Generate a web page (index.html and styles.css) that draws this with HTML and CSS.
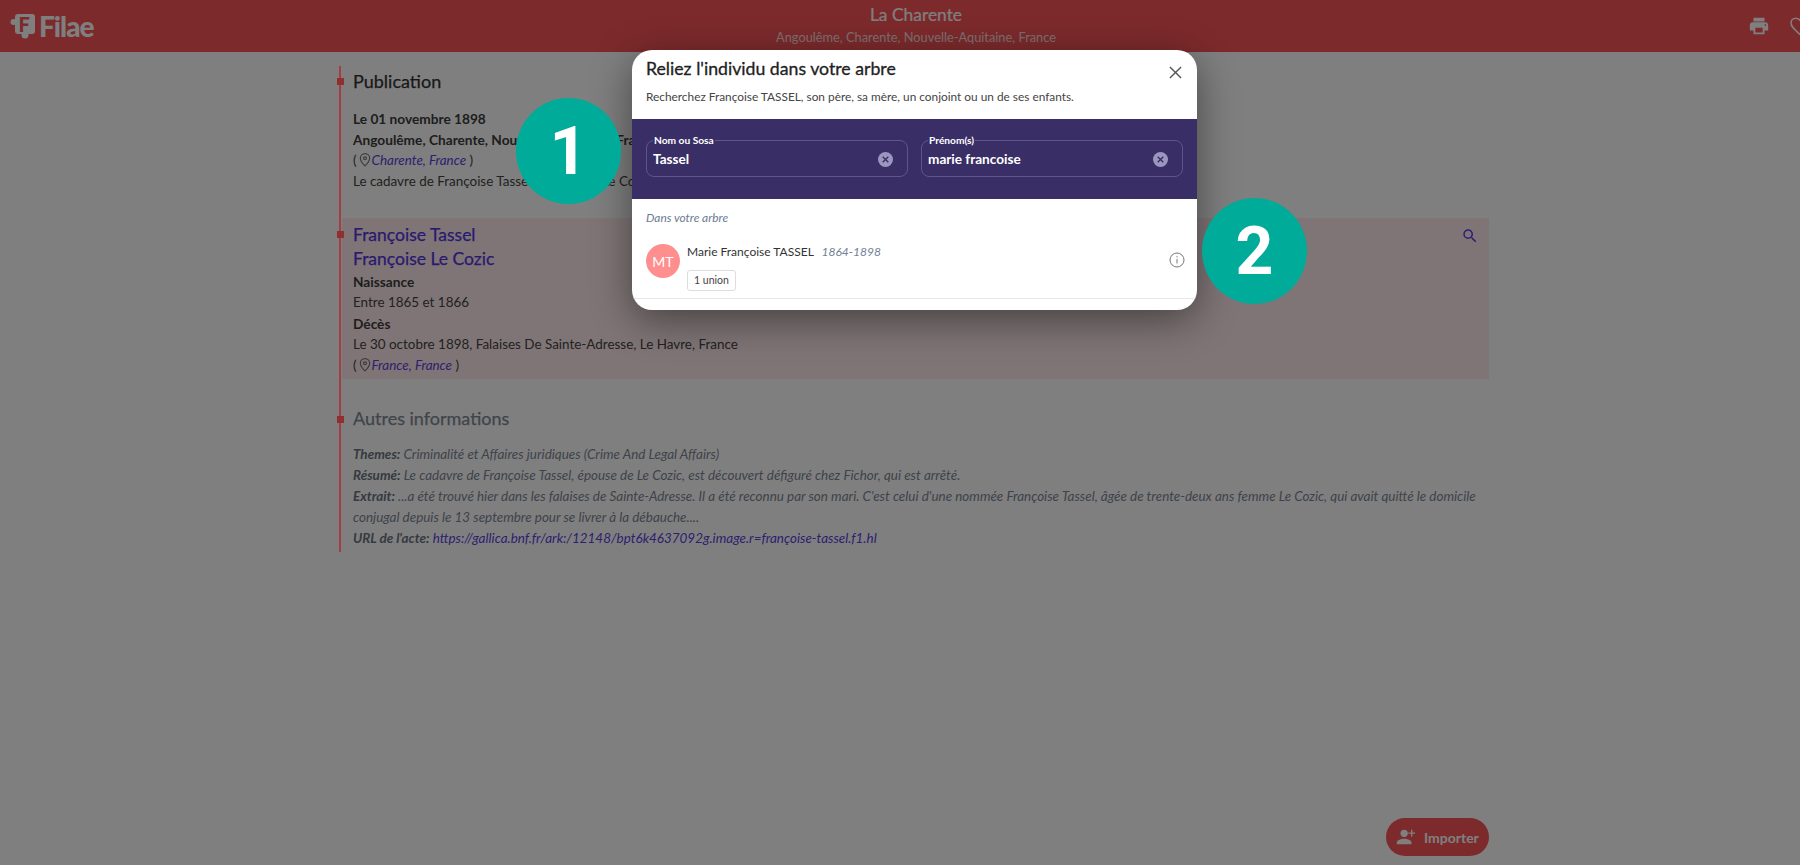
FILE: index.html
```html
<!DOCTYPE html>
<html lang="fr">
<head>
    <meta charset="UTF-8">
    <title>La Charente – Filae</title>
    <link rel="stylesheet" href="styles.css">
</head>
<body>
    <div class="topbar">
        <div class="brand">
            <svg class="brand-mark" viewBox="0 0 26 26" width="26" height="26">
                <rect x="5" y="1" width="20" height="20" rx="3" fill="#fff"/>
                <circle cx="3.5" cy="9" r="3" fill="#fff"/>
                <circle cx="15" cy="22" r="3.5" fill="#fff"/>
                <text x="8.5" y="18.500" class="brand-f">F</text>
            </svg>
            <span class="brand-name">Filae</span>
        </div>
        <div class="topbar-title">
            <div class="place">La Charente</div>
            <div class="place-sub">Angoulême, Charente, Nouvelle-Aquitaine, France</div>
        </div>
        <div class="topbar-icons">
            <svg viewBox="0 0 24 24" width="22" height="22" fill="#fff"><path d="M19 8H5c-1.66 0-3 1.34-3 3v6h4v4h12v-4h4v-6c0-1.66-1.34-3-3-3zm-3 11H8v-5h8v5zm3-7c-.55 0-1-.45-1-1s.45-1 1-1 1 .45 1 1-.45 1-1 1zm-1-9H6v4h12V3z"/></svg>
            <svg viewBox="0 0 24 24" width="24" height="24" fill="none" stroke="#fff" stroke-width="1.6"><path d="M12 20.5l-1.2-1.1C6 15.100 3 12.400 3 9c0-2.700 2.100-4.800 4.800-4.800 1.600 0 3.100.7 4.200 1.900 1.100-1.200 2.600-1.900 4.200-1.900C18.900 4.200 21 6.300 21 9c0 3.400-3 6.100-7.800 10.400z"/></svg>
        </div>
    </div>

    <div class="content">
        <div class="block">
            <h2 class="block-title">Publication</h2>
            <p class="strong">Le 01 novembre 1898</p>
            <p class="strong">Angoulême, Charente, Nouvelle-Aquitaine, France</p>
            <p>(<svg class="pin" viewBox="0 0 24 24" width="14" height="14" fill="none" stroke="#777" stroke-width="2"><path d="M12 22s-8-7.500-8-13a8 8 0 0 1 16 0c0 5.500-8 13-8 13z"/><circle cx="12" cy="9" r="2.500"/></svg><a class="link">Charente, France</a> )</p>
            <p>Le cadavre de Françoise Tassel, épouse de Le Cozic, est découvert défiguré chez Fichor, qui est arrêté.</p>
        </div>

        <div class="block block-hit">
            <svg class="hit-search" viewBox="0 0 24 24" width="18" height="18" fill="#5c3fe0"><path d="M15.500 14h-.79l-.28-.27A6.470 6.470 0 0 0 16 9.500 6.500 6.500 0 1 0 9.500 16c1.610 0 3.090-.59 4.230-1.570l.27.28v.79l5 4.990L20.490 19l-4.990-5zm-6 0C7.010 14 5 11.990 5 9.500S7.010 5 9.500 5 14 7.010 14 9.500 11.990 14 9.500 14z"/></svg>
            <h2 class="hit-name">Françoise Tassel</h2>
            <h2 class="hit-name">Françoise Le Cozic</h2>
            <p class="strong">Naissance</p>
            <p>Entre 1865 et 1866</p>
            <p class="strong">Décès</p>
            <p>Le 30 octobre 1898, Falaises De Sainte-Adresse, Le Havre, France</p>
            <p>(<svg class="pin" viewBox="0 0 24 24" width="14" height="14" fill="none" stroke="#777" stroke-width="2"><path d="M12 22s-8-7.500-8-13a8 8 0 0 1 16 0c0 5.500-8 13-8 13z"/><circle cx="12" cy="9" r="2.500"/></svg><a class="link">France, France</a> )</p>
        </div>

        <div class="block block-other">
            <h2 class="block-title muted">Autres informations</h2>
            <div class="notes">
                <p><b>Themes:</b> Criminalité et Affaires juridiques (Crime And Legal Affairs)</p>
                <p><b>Résumé:</b> Le cadavre de Françoise Tassel, épouse de Le Cozic, est découvert défiguré chez Fichor, qui est arrêté.</p>
                <p><b>Extrait:</b> ...a été trouvé hier dans les falaises de Sainte-Adresse. Il a été reconnu par son mari. C'est celui d'une nommée Françoise Tassel, âgée de trente-deux ans femme Le Cozic, qui avait quitté le domicile conjugal depuis le 13 septembre pour se livrer à la débauche....</p>
                <p><b>URL de l'acte:</b> <a class="link">https://gallica.bnf.fr/ark:/12148/bpt6k4637092g.image.r=françoise-tassel.f1.hl</a></p>
            </div>
        </div>
    </div>

    <button class="import-btn">
        <svg viewBox="0 0 24 24" width="22" height="22" fill="#fff"><circle cx="10" cy="8" r="4"/><path d="M10 14c-2.670 0-8 1.340-8 4v2h16v-2c0-2.660-5.330-4-8-4z"/><path d="M19 7V4h-1.500v3h-3v1.500h3v3H19v-3h3V7z"/></svg>
        Importer
    </button>

    <div class="overlay"></div>

    <div class="timeline">
        <span class="dot dot-pub"></span>
        <span class="dot dot-hit"></span>
        <span class="dot dot-other"></span>
    </div>

    <div class="modal">
        <div class="modal-head">
            <h3>Reliez l'individu dans votre arbre</h3>
            <svg class="modal-close" viewBox="0 0 14 14" width="13" height="13" stroke="#555" stroke-width="1.500"><path d="M1 1l12 12M13 1L1 13"/></svg>
            <p>Recherchez Françoise TASSEL, son père, sa mère, un conjoint ou un de ses enfants.</p>
        </div>
        <div class="search-band">
            <fieldset class="field">
                <legend>Nom ou Sosa</legend>
                <span class="field-value">Tassel</span>
                <svg viewBox="0 0 16 16" width="15" height="15"><circle cx="8" cy="8" r="8" fill="#9c97bf"/><path d="M5 5l6 6M11 5l-6 6" stroke="#392e66" stroke-width="1.500"/></svg>
            </fieldset>
            <fieldset class="field">
                <legend>Prénom(s)</legend>
                <span class="field-value">marie francoise</span>
                <svg viewBox="0 0 16 16" width="15" height="15"><circle cx="8" cy="8" r="8" fill="#9c97bf"/><path d="M5 5l6 6M11 5l-6 6" stroke="#392e66" stroke-width="1.500"/></svg>
            </fieldset>
        </div>
        <div class="results">
            <div class="results-label">Dans votre arbre</div>
            <div class="result-row">
                <div class="avatar">MT</div>
                <div class="result-main">
                    <div class="result-name">Marie Françoise TASSEL <i>1864-1898</i></div>
                    <span class="badge">1 union</span>
                </div>
                <svg class="info" viewBox="0 0 16 16" width="16" height="16" fill="none" stroke="#777"><circle cx="8" cy="8" r="7"/><path d="M8 7v4.500M8 4.200v1.300"/></svg>
            </div>
        </div>
    </div>

    <div class="step step-one">1</div>
    <div class="step step-two">2</div>
</body>
</html>
```

FILE: styles.css
```css
* {
    box-sizing: border-box;
}
html, body {
    height: 100%;
}
body {
    margin: 0;
    overflow: hidden;
    position: relative;
    background-color: #fff;
    font-family: 'Lato', sans-serif;
    font-size: 13.45px;
    line-height: 21px;
    color: #444;
}
p {
    margin: 0;
}

/* barre du haut */
.topbar {
    display: flex;
    align-items: center;
    justify-content: space-between;
    width: 1832px;
    height: 52px;
    padding: 0 20px 0 10px;
    background-color: #fa5558;
    color: #fff;
}
.brand {
    display: flex;
    align-items: center;
    gap: 3px;
    width: 190px;
}
.brand-f {
    font-family: 'Lato', sans-serif;
    font-weight: 900;
    font-size: 20px;
    fill: #fa5558;
}
.brand-name {
    font-size: 28px;
    font-weight: 900;
    letter-spacing: -1px;
    line-height: 30px;
}
.topbar-title {
    margin-top: -4px;
    text-align: center;
}
.place {
    font-size: 17.4px;
    line-height: 24px;
    -webkit-text-stroke: .2px;
}
.place-sub {
    margin-top: 1px;
    font-size: 12.8px;
    line-height: 18px;
    opacity: .8;
}
.topbar-icons {
    display: flex;
    align-items: center;
    justify-content: flex-end;
    gap: 18px;
    width: 180px;
}

/* colonne de contenu */
.content {
    width: 1147px;
    margin: 14px 0 0 342px;
}
.block {
    position: relative;
    padding: 0 0 26px 11px;
}
.block-title {
    margin: 0 0 12px;
    font-size: 18px;
    line-height: 30px;
    font-weight: 400;
    color: #333;
    -webkit-text-stroke: .25px;
}
.muted {
    color: #7f8a96;
}
.strong {
    font-size: 13.7px;
    font-weight: 700;
    color: #3c3c3c;
}
.link {
    color: #5c3fe0;
    font-style: italic;
}
.pin {
    margin-left: 1px;
    vertical-align: -2px;
}
.block-hit {
    padding-top: 5px;
    padding-bottom: 3px;
    background-color: #ffeaec;
}
.hit-name {
    margin: 0;
    font-size: 17.5px;
    line-height: 24px;
    font-weight: 400;
    color: #5235e0;
    -webkit-text-stroke: .25px;
}
.hit-search {
    position: absolute;
    right: 10px;
    top: 9px;
}
.block-other {
    padding: 24px 0 2px 11px;
}
.block-other .block-title {
    margin-bottom: 11px;
}
.notes {
    font-style: italic;
    color: #7c8694;
}
.notes b {
    font-weight: 700;
    color: #6a7482;
}

.timeline {
    position: absolute;
    left: 339px;
    top: 66px;
    width: 2px;
    height: 486px;
    background-color: #a53e44;
}
.dot {
    position: absolute;
    left: -2px;
    width: 7px;
    height: 7px;
    background-color: #8f2f30;
}
.dot-pub {
    top: 12px;
}
.dot-hit {
    top: 165px;
}
.dot-other {
    top: 350px;
}

.import-btn {
    position: absolute;
    left: 1386px;
    top: 818px;
    display: flex;
    align-items: center;
    gap: 7px;
    width: 103px;
    height: 38px;
    padding: 0 0 0 9px;
    border: none;
    border-radius: 19px;
    background-color: #fa5558;
    color: #fff;
    font-family: 'Lato', sans-serif;
    font-weight: 700;
    font-size: 14px;
    white-space: nowrap;
}

.overlay {
    position: absolute;
    inset: 0;
    background-color: rgba(0, 0, 0, .5);
}

/* fenêtre */
.modal {
    position: absolute;
    left: 632px;
    top: 50px;
    width: 565px;
    height: 260px;
    background-color: #fff;
    border-radius: 20px;
    box-shadow: 0 10px 40px rgba(0, 0, 0, .45);
    overflow: hidden;
}
.modal-head {
    position: relative;
    height: 69px;
    padding: 7px 14px 0;
}
.modal-head h3 {
    margin: 0;
    font-size: 17.7px;
    line-height: 24px;
    font-weight: 400;
    color: #222;
    -webkit-text-stroke: .3px;
}
.modal-head p {
    margin-top: 7px;
    font-size: 11.85px;
    line-height: 18px;
    color: #444;
}
.modal-close {
    position: absolute;
    right: 15px;
    top: 16px;
}
.search-band {
    display: grid;
    grid-template-columns: 1fr 1fr;
    gap: 13px;
    height: 80px;
    padding: 15px 14px 0;
    background-color: #392e66;
}
.field {
    display: flex;
    align-items: center;
    justify-content: space-between;
    min-width: 0;
    height: 43px;
    margin: 0;
    padding: 0 14px 4px 6px;
    border: 1px solid #5f5789;
    border-radius: 8px;
    color: #fff;
}
.field legend {
    padding: 0 1px;
    font-size: 10.2px;
    line-height: 12px;
    font-weight: 700;
}
.field-value {
    font-size: 13.6px;
    font-weight: 700;
}
.results {
    padding: 8px 14px 0;
}
.results-label {
    font-size: 11.9px;
    font-style: italic;
    color: #6c7a90;
}
.result-row {
    display: flex;
    align-items: flex-start;
    gap: 7px;
    height: 71px;
    margin: 0 -14px;
    padding: 15px 12px 0 14px;
    border-bottom: 1px solid #e8e8e8;
}
.avatar {
    display: flex;
    align-items: center;
    justify-content: center;
    flex: none;
    width: 34px;
    height: 34px;
    margin-top: 1px;
    border-radius: 50%;
    background-color: #ff8e8e;
    color: #fff;
    font-size: 14px;
}
.result-main {
    flex: 1;
}
.result-name {
    font-size: 12px;
    line-height: 18px;
    color: #333;
}
.result-name i {
    margin-left: 5px;
    color: #718096;
}
.badge {
    display: inline-block;
    margin-top: 9px;
    padding: 0 6px;
    border: 1px solid #ddd;
    border-radius: 3px;
    font-size: 10.5px;
    line-height: 19px;
    color: #444;
}
.info {
    margin-top: 9px;
}

/* pastilles numérotées */
.step {
    position: absolute;
    display: flex;
    align-items: center;
    justify-content: center;
    width: 105px;
    height: 106px;
    border-radius: 50%;
    background-color: #00ab9a;
    color: #fff;
    font-family: 'Roboto', sans-serif;
    font-weight: 700;
    font-size: 66px;
}
.step-one {
    left: 516px;
    top: 98px;
}
.step-two {
    left: 1202px;
    top: 198px;
}
```
